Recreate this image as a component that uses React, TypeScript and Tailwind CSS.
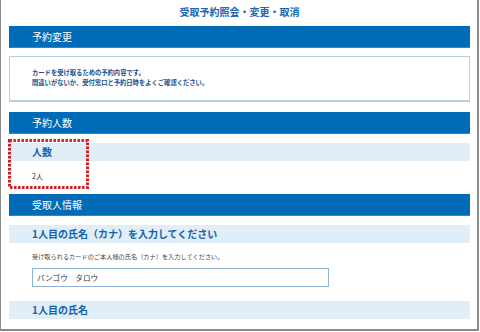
import React from "react";

const jp = { fontFamily: '"Noto Sans CJK JP", "Noto Sans", sans-serif' };

function BlueBar({ label }: { label: string }) {
  return (
    <div className="h-[22px] bg-[#006bb7] border-b border-[#2f86c9] flex items-center pl-[23px] text-[10px] leading-none text-white">
      {label}
    </div>
  );
}

function LightBar({ label }: { label: string }) {
  return (
    <div className="h-[18px] bg-[#e1edf7] flex items-center pl-[23px] text-[10px] leading-none font-bold text-[#1262ae]">
      {label}
    </div>
  );
}

export default function App() {
  return (
    <div style={jp} className="relative w-[479px] h-[331px] bg-white border-l border-r-2 border-b-2 border-[#8a8a8a] overflow-hidden">
      <div className="flex flex-col pl-[8px] pr-[7px]">
        <div className="h-[26px] flex items-center justify-center pb-[3px] text-[10px] leading-none font-bold text-[#1c64ae]">
          受取予約照会・変更・取消
        </div>
        <BlueBar label="予約変更" />
        <div className="mt-[8px] h-[46px] border border-[#b7cfe5] border-b-2 pl-[22px] pt-[11px] text-[6.3px] leading-[10px] font-bold text-[#1b4f8c]">
          <div>カードを受け取るための予約内容です。</div>
          <div>間違いがないか、受付窓口と予約日時をよくご確認ください。</div>
        </div>
        <div className="mt-[10px]">
          <BlueBar label="予約人数" />
        </div>
        <div className="mt-[9px]">
          <LightBar label="人数" />
        </div>
        <div className="h-[33px] pl-[23px] pt-[10px] text-[7px] leading-[10px] text-[#333]">2人</div>
        <BlueBar label="受取人情報" />
        <div className="mt-[9px]">
          <LightBar label="1人目の氏名（カナ）を入力してください" />
        </div>
        <div className="mt-[9px] pl-[23px] text-[6.2px] leading-[10px] text-[#444]">
          受け取られるカードのご本人様の氏名（カナ）を入力してください。
        </div>
        <div className="mt-[6px] ml-[23px] w-[297px] h-[19px] border border-[#8fb4d6] flex items-center pl-[4px] text-[7.6px] leading-none text-[#333]">
          バンゴウ　タロウ
        </div>
        <div className="mt-[14px]">
          <LightBar label="1人目の氏名" />
        </div>
      </div>
      <svg className="absolute left-[7px] top-[139px]" width="81" height="50" viewBox="0 0 81 50">
        <rect x="1.5" y="1.5" width="78" height="47" fill="none" stroke="#cf1b1f" strokeWidth="3" strokeDasharray="2.4 1.6" />
      </svg>
    </div>
  );
}
